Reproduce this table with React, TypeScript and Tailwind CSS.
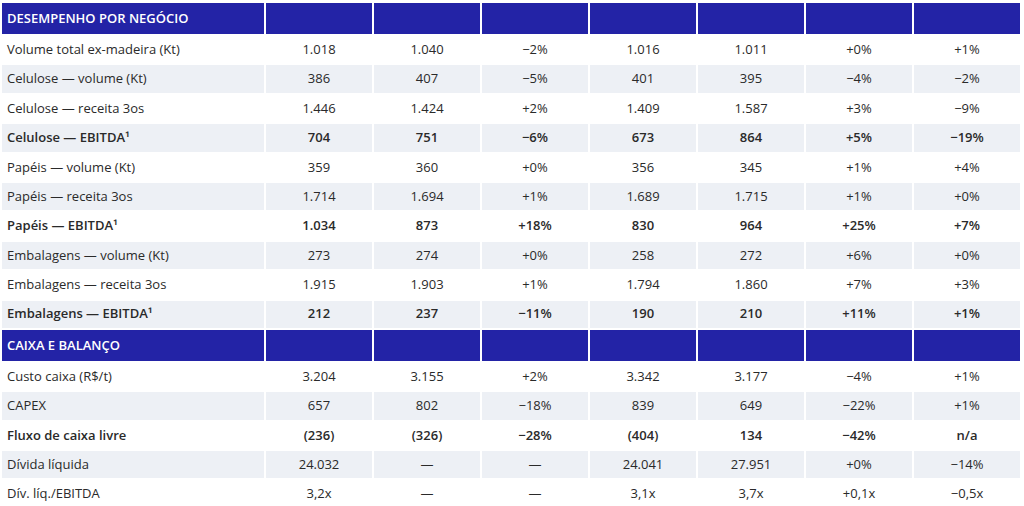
import React from "react";

type Row = {
  label: string;
  values: string[];
  bold?: boolean;
};

const negocio: Row[] = [
  { label: "Volume total ex-madeira (Kt)", values: ["1.018", "1.040", "−2%", "1.016", "1.011", "+0%", "+1%"] },
  { label: "Celulose — volume (Kt)", values: ["386", "407", "−5%", "401", "395", "−4%", "−2%"] },
  { label: "Celulose — receita 3os", values: ["1.446", "1.424", "+2%", "1.409", "1.587", "+3%", "−9%"] },
  { label: "Celulose — EBITDA¹", values: ["704", "751", "−6%", "673", "864", "+5%", "−19%"], bold: true },
  { label: "Papéis — volume (Kt)", values: ["359", "360", "+0%", "356", "345", "+1%", "+4%"] },
  { label: "Papéis — receita 3os", values: ["1.714", "1.694", "+1%", "1.689", "1.715", "+1%", "+0%"] },
  { label: "Papéis — EBITDA¹", values: ["1.034", "873", "+18%", "830", "964", "+25%", "+7%"], bold: true },
  { label: "Embalagens — volume (Kt)", values: ["273", "274", "+0%", "258", "272", "+6%", "+0%"] },
  { label: "Embalagens — receita 3os", values: ["1.915", "1.903", "+1%", "1.794", "1.860", "+7%", "+3%"] },
  { label: "Embalagens — EBITDA¹", values: ["212", "237", "−11%", "190", "210", "+11%", "+1%"], bold: true },
];

const caixa: Row[] = [
  { label: "Custo caixa (R$/t)", values: ["3.204", "3.155", "+2%", "3.342", "3.177", "−4%", "+1%"] },
  { label: "CAPEX", values: ["657", "802", "−18%", "839", "649", "−22%", "+1%"] },
  { label: "Fluxo de caixa livre", values: ["(236)", "(326)", "−28%", "(404)", "134", "−42%", "n/a"], bold: true },
  { label: "Dívida líquida", values: ["24.032", "—", "—", "24.041", "27.951", "+0%", "−14%"] },
  { label: "Dív. líq./EBITDA", values: ["3,2x", "—", "—", "3,1x", "3,7x", "+0,1x", "−0,5x"] },
];

const SectionHeader = ({ title }: { title: string }) => (
  <>
    <div className="h-[31px] bg-[#2323a6] flex items-center px-[5px] text-[13px] font-semibold uppercase text-white">
      {title}
    </div>
    {Array.from({ length: 7 }).map((_, i) => (
      <div key={i} className="h-[31px] bg-[#2323a6]" />
    ))}
  </>
);

const DataRow = ({ row, index }: { row: Row; index: number }) => {
  const bg = index % 2 === 1 ? "bg-[#edf0f5]" : "bg-white";
  const weight = row.bold ? "font-semibold" : "font-normal";
  return (
    <>
      <div className={`h-[27.4px] ${bg} ${weight} flex items-center px-[5px]`}>{row.label}</div>
      {row.values.map((v, i) => (
        <div key={i} className={`h-[27.4px] ${bg} ${weight} flex items-center justify-center`}>
          {v}
        </div>
      ))}
    </>
  );
};

export default function App() {
  return (
    <div className="w-[1024px] h-[506px] overflow-hidden bg-white pl-[2px] pt-[3px] font-['Open_Sans',sans-serif] text-[13px] text-[#2a2a2a]">
      <div className="grid grid-cols-[262px_repeat(7,106px)] gap-[2px]">
        <SectionHeader title="Desempenho por negócio" />
        {negocio.map((row, i) => (
          <DataRow key={row.label} row={row} index={i} />
        ))}
        <SectionHeader title="Caixa e balanço" />
        {caixa.map((row, i) => (
          <DataRow key={row.label} row={row} index={i} />
        ))}
      </div>
    </div>
  );
}
